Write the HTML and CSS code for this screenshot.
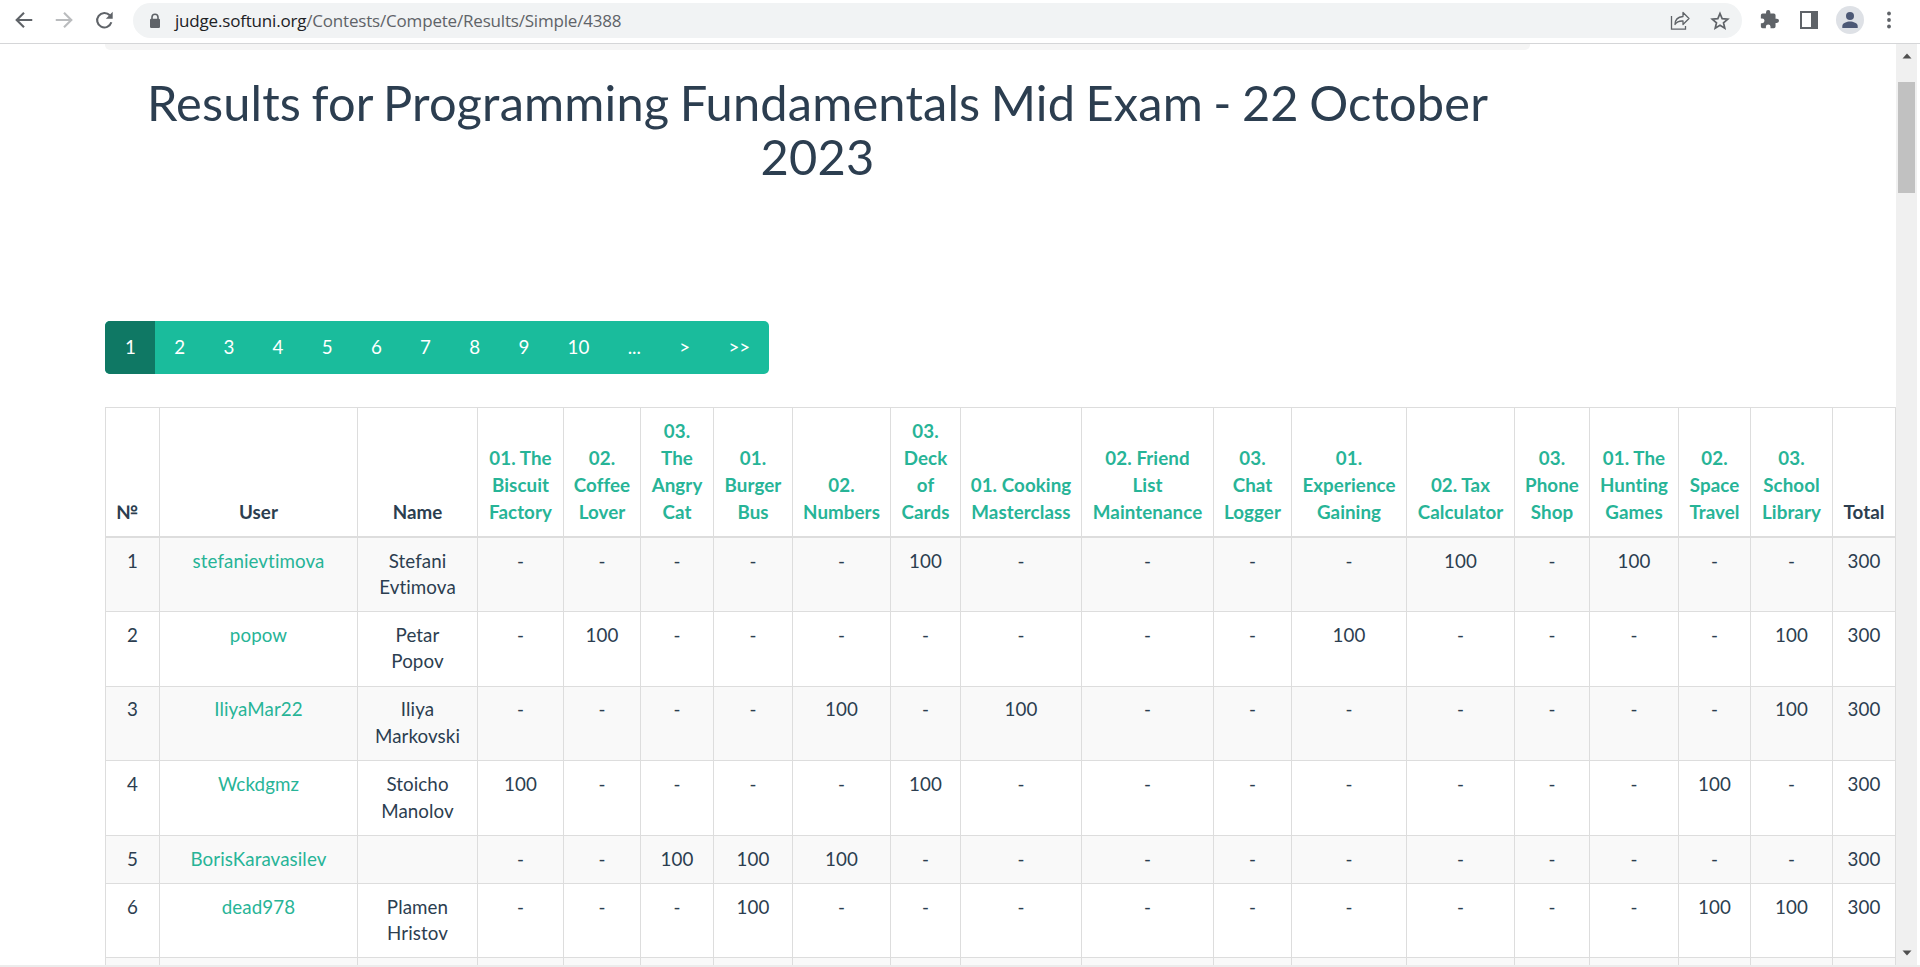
FILE: index.html
```
<!DOCTYPE html>
<html lang="en">
<head>
<meta charset="utf-8">
<title>Results for Programming Fundamentals Mid Exam - 22 October 2023</title>
<link rel="stylesheet" href="styles.css">
</head>
<body>
<header class="toolbar">
  <svg class="icon nav" viewBox="0 0 24 24"><path d="M21 12H4.500M12 4l-8 8 8 8" fill="none" stroke="#5f6368" stroke-width="2.300"/></svg>
  <svg class="icon nav" viewBox="0 0 24 24"><path d="M3 12h16.500M12 4l8 8-8 8" fill="none" stroke="#babcbe" stroke-width="2.300"/></svg>
  <svg class="icon nav" viewBox="0 0 24 24"><path d="M20 14.500a7.900 7.900 0 1 1-1.700-7.600" fill="none" stroke="#5f6368" stroke-width="2.300"/><path d="M21.500 3v7.500H14z" fill="#5f6368"/></svg>
  <div class="address">
    <svg class="icon lock" viewBox="0 0 12 16"><path d="M3 7V4.300a3 3 0 0 1 6 0V7" fill="none" stroke="#5f6368" stroke-width="1.600"/><rect x="1" y="5.800" width="10" height="9.200" rx="1.200" fill="#5f6368"/></svg>
    <span class="url"><b>judge.softuni.org</b>/Contests/Compete/Results/Simple/4388</span>
    <svg class="icon share" viewBox="0 0 20 20"><path d="M1.500 5v13.200h14V15" fill="none" stroke="#5f6368" stroke-width="1.300"/><path d="M13 5.500V1.500l6 6-6 6V10c-4-.2-6.500 1-8 3.500C5 9 7.500 6 13 5.500z" fill="none" stroke="#5f6368" stroke-width="1.300" stroke-linejoin="round"/></svg>
    <svg class="icon star" viewBox="0 0 20 20"><path d="M10 2.500l2.150 5.100 5.600.5-4.250 3.650 1.300 5.450L10 14.300l-4.800 2.900 1.300-5.450L2.250 8.100l5.600-.5z" fill="none" stroke="#5f6368" stroke-width="1.700"/></svg>
  </div>
  <svg class="icon puzzle" viewBox="1 1 22 22"><path fill="#5f6368" d="M20.500 11H19V7a2 2 0 0 0-2-2h-4V3.500a2.500 2.500 0 0 0-5 0V5H4a2 2 0 0 0-2 2v3.800h1.500a2.700 2.700 0 0 1 0 5.400H2V20a2 2 0 0 0 2 2h3.800v-1.500a2.700 2.700 0 0 1 5.400 0V22H17a2 2 0 0 0 2-2v-4h1.500a2.500 2.500 0 0 0 0-5z"/></svg>
  <svg class="icon panel" viewBox="0 0 18 18"><path fill="#5f6368" fill-rule="evenodd" d="M0 0h18v18H0zM2 2v14h9V2z"/></svg>
  <svg class="icon avatar" viewBox="0 0 28 28"><circle cx="14" cy="14" r="14" fill="#dee1e6"/><circle cx="14" cy="10" r="4" fill="#4c5875"/><path d="M6.300 22v-2c0-3 4.500-4.600 7.700-4.600s7.700 1.600 7.700 4.600v2z" fill="#4c5875"/></svg>
  <svg class="icon dots" viewBox="0 0 4 18"><circle cx="2" cy="2.500" r="1.900" fill="#5f6368"/><circle cx="2" cy="9" r="1.900" fill="#5f6368"/><circle cx="2" cy="15.500" r="1.900" fill="#5f6368"/></svg>
</header>
<div class="viewport">
  <main class="page">
    <div class="breadcrumb"></div>
    <h1>Results for Programming Fundamentals Mid Exam - 22 October 2023</h1>
    <nav class="pager"><a class="active">1</a><a>2</a><a>3</a><a>4</a><a>5</a><a>6</a><a>7</a><a>8</a><a>9</a><a>10</a><a>...</a><a>&gt;</a><a>&gt;&gt;</a></nav>
    <table class="results">
      <colgroup><col class="w54"><col class="w198"><col class="w120"><col class="w86"><col class="w77"><col class="w73"><col class="w79"><col class="w98"><col class="w70"><col class="w121"><col class="w132"><col class="w78"><col class="w115"><col class="w108"><col class="w75"><col class="w89"><col class="w72"><col class="w82"><col class="w63"></colgroup>
      <thead><tr>
        <th class="num">№</th><th>User</th><th>Name</th>
        <th><a>01. The<br>Biscuit<br>Factory</a></th><th><a>02.<br>Coffee<br>Lover</a></th><th><a>03.<br>The<br>Angry<br>Cat</a></th>
        <th><a>01.<br>Burger<br>Bus</a></th><th><a>02.<br>Numbers</a></th><th><a>03.<br>Deck<br>of<br>Cards</a></th>
        <th><a>01. Cooking<br>Masterclass</a></th><th><a>02. Friend<br>List<br>Maintenance</a></th><th><a>03.<br>Chat<br>Logger</a></th>
        <th><a>01.<br>Experience<br>Gaining</a></th><th><a>02. Tax<br>Calculator</a></th><th><a>03.<br>Phone<br>Shop</a></th>
        <th><a>01. The<br>Hunting<br>Games</a></th><th><a>02.<br>Space<br>Travel</a></th><th><a>03.<br>School<br>Library</a></th><th>Total</th>
      </tr></thead>
      <tbody>
        <tr class="short"><td>1</td><td><a>stefanievtimova</a></td><td>Stefani<br>Evtimova</td><td>-</td><td>-</td><td>-</td><td>-</td><td>-</td><td>100</td><td>-</td><td>-</td><td>-</td><td>-</td><td>100</td><td>-</td><td>100</td><td>-</td><td>-</td><td>300</td></tr>
        <tr><td>2</td><td><a>popow</a></td><td>Petar<br>Popov</td><td>-</td><td>100</td><td>-</td><td>-</td><td>-</td><td>-</td><td>-</td><td>-</td><td>-</td><td>100</td><td>-</td><td>-</td><td>-</td><td>-</td><td>100</td><td>300</td></tr>
        <tr><td>3</td><td><a>IliyaMar22</a></td><td>Iliya<br>Markovski</td><td>-</td><td>-</td><td>-</td><td>-</td><td>100</td><td>-</td><td>100</td><td>-</td><td>-</td><td>-</td><td>-</td><td>-</td><td>-</td><td>-</td><td>100</td><td>300</td></tr>
        <tr><td>4</td><td><a>Wckdgmz</a></td><td>Stoicho<br>Manolov</td><td>100</td><td>-</td><td>-</td><td>-</td><td>-</td><td>100</td><td>-</td><td>-</td><td>-</td><td>-</td><td>-</td><td>-</td><td>-</td><td>100</td><td>-</td><td>300</td></tr>
        <tr class="single"><td>5</td><td><a>BorisKaravasilev</a></td><td></td><td>-</td><td>-</td><td>100</td><td>100</td><td>100</td><td>-</td><td>-</td><td>-</td><td>-</td><td>-</td><td>-</td><td>-</td><td>-</td><td>-</td><td>-</td><td>300</td></tr>
        <tr class="short"><td>6</td><td><a>dead978</a></td><td>Plamen<br>Hristov</td><td>-</td><td>-</td><td>-</td><td>100</td><td>-</td><td>-</td><td>-</td><td>-</td><td>-</td><td>-</td><td>-</td><td>-</td><td>-</td><td>100</td><td>100</td><td>300</td></tr>
        <tr><td></td><td></td><td></td><td></td><td></td><td></td><td></td><td></td><td></td><td></td><td></td><td></td><td></td><td></td><td></td><td></td><td></td><td></td><td></td></tr>
      </tbody>
    </table>
  </main>
  <aside class="scrollbar">
    <svg class="arrow" viewBox="0 0 10 6"><path d="M5 0.500L9.500 5.500h-9z" fill="#505050"/></svg>
    <div class="thumb"></div>
    <svg class="arrow down" viewBox="0 0 10 6"><path d="M5 5.500L9.500 0.500h-9z" fill="#505050"/></svg>
  </aside>
</div>
<div class="bottom-edge"></div>
</body>
</html>
```
FILE: styles.css
```
* { box-sizing: border-box; }
body {
  margin: 0;
  width: 1920px;
  height: 967px;
  overflow: hidden;
  display: flex;
  flex-direction: column;
  background: #fff;
  font-family: Lato, "Liberation Sans", sans-serif;
  font-size: 18.75px;
  line-height: 26.79px;
  font-variant-ligatures: none;
  color: #2c3e50;
}
.icon { display: block; flex: none; }

/* Browser toolbar */
.toolbar {
  flex: none;
  height: 44px;
  display: flex;
  align-items: flex-start;
  border-bottom: 1px solid #d5d6d8;
  padding: 3px 0 0 13px;
}
.nav { width: 22px; height: 22px; margin: 6px 18px 0 0; }
.address {
  display: flex;
  width: 1609px;
  height: 35px;
  border-radius: 18px;
  background: #f1f3f4;
  padding-left: 16px;
}
.lock { width: 12px; height: 16px; margin-top: 10px; }
.url {
  margin: 5px auto 0 14px;
  font-family: "Open Sans", "Noto Sans", sans-serif;
  font-size: 17px;
  letter-spacing: -0.19px;
  color: #5f6368;
}
.url b { font-weight: 400; color: #202124; }
.share { width: 20px; height: 20px; margin: 8px 20px 0 0; }
.star { width: 20px; height: 20px; margin: 8px 12px 0 0; }
.puzzle { width: 19px; height: 19px; margin: 7px 0 0 18px; }
.panel { width: 18px; height: 18px; margin: 8px 0 0 21px; }
.avatar { width: 28px; height: 28px; margin: 3px 0 0 18px; }
.dots { width: 4px; height: 18px; margin: 8px 0 0 23px; }

/* Page */
.viewport { flex: none; height: 921px; display: flex; }
.page {
  width: 1896px;
  height: 921px;
  overflow: hidden;
  padding-left: 105px;
}
.breadcrumb {
  width: 1425px;
  height: 6px;
  background: #f5f5f5;
  border-radius: 0 0 5px 5px;
}
h1 {
  width: 1425px;
  height: 108px;
  margin: 26px 0 0;
  font-size: 48.75px;
  line-height: 53.6px;
  font-weight: 400;
  letter-spacing: 0.17px;
  word-spacing: -2.3px;
  text-align: center;
}
.pager {
  display: flex;
  width: 664px;
  height: 53px;
  margin: 137px 0 33px;
  border-radius: 5px;
  overflow: hidden;
  background: #1abc9c;
  color: #fff;
}
.pager a { padding: 13px 19.15px; }
.pager .active { padding: 13px 19.2px 13px 20px; background: #0f7864; }

/* Results */
.results {
  table-layout: fixed;
  width: 1791px;
  border-collapse: separate;
  border-spacing: 0;
  border-left: 1px solid #ddd;
  border-top: 1px solid #ddd;
}
.results a { color: #27b497; }
th, td {
  padding: 10px 0;
  border-right: 1px solid #ddd;
  border-bottom: 1px solid #ddd;
  text-align: center;
  vertical-align: top;
}
th {
  height: 130px;
  padding: 9px 0 11px;
  line-height: 27px;
  vertical-align: bottom;
  border-bottom-width: 2px;
  font-weight: 700;
  letter-spacing: 0.07px;
}
.num { padding-right: 11px; }
td {
  height: 74.7px;
  padding: 9.5px 0;
  line-height: 26.7px;
  letter-spacing: 0.09px;
}
tbody .short td { height: 74px; }
tbody .single td { height: 48px; }
tbody tr:nth-child(odd) { background: #f9f9f9; }
.w54 { width: 54px; } .w198 { width: 198px; } .w120 { width: 120px; }
.w86 { width: 86px; } .w77 { width: 77px; } .w73 { width: 73px; }
.w79 { width: 79px; } .w98 { width: 98px; } .w70 { width: 70px; }
.w121 { width: 121px; } .w132 { width: 132px; } .w78 { width: 78px; }
.w115 { width: 115px; } .w108 { width: 108px; } .w75 { width: 75px; }
.w89 { width: 89px; } .w72 { width: 72px; } .w82 { width: 82px; }
.w63 { width: 63px; }

/* Scrollbar */
.scrollbar {
  width: 21px;
  display: flex;
  flex-direction: column;
  align-items: center;
  background: #f0f0f0;
}
.arrow { width: 10px; height: 6px; margin-top: 9px; }
.thumb { width: 17px; height: 111px; margin-top: 23px; background: #c1c1c1; }
.arrow.down { margin: auto 0 9px; }
.bottom-edge { height: 2px; background: #ececec; }
```
